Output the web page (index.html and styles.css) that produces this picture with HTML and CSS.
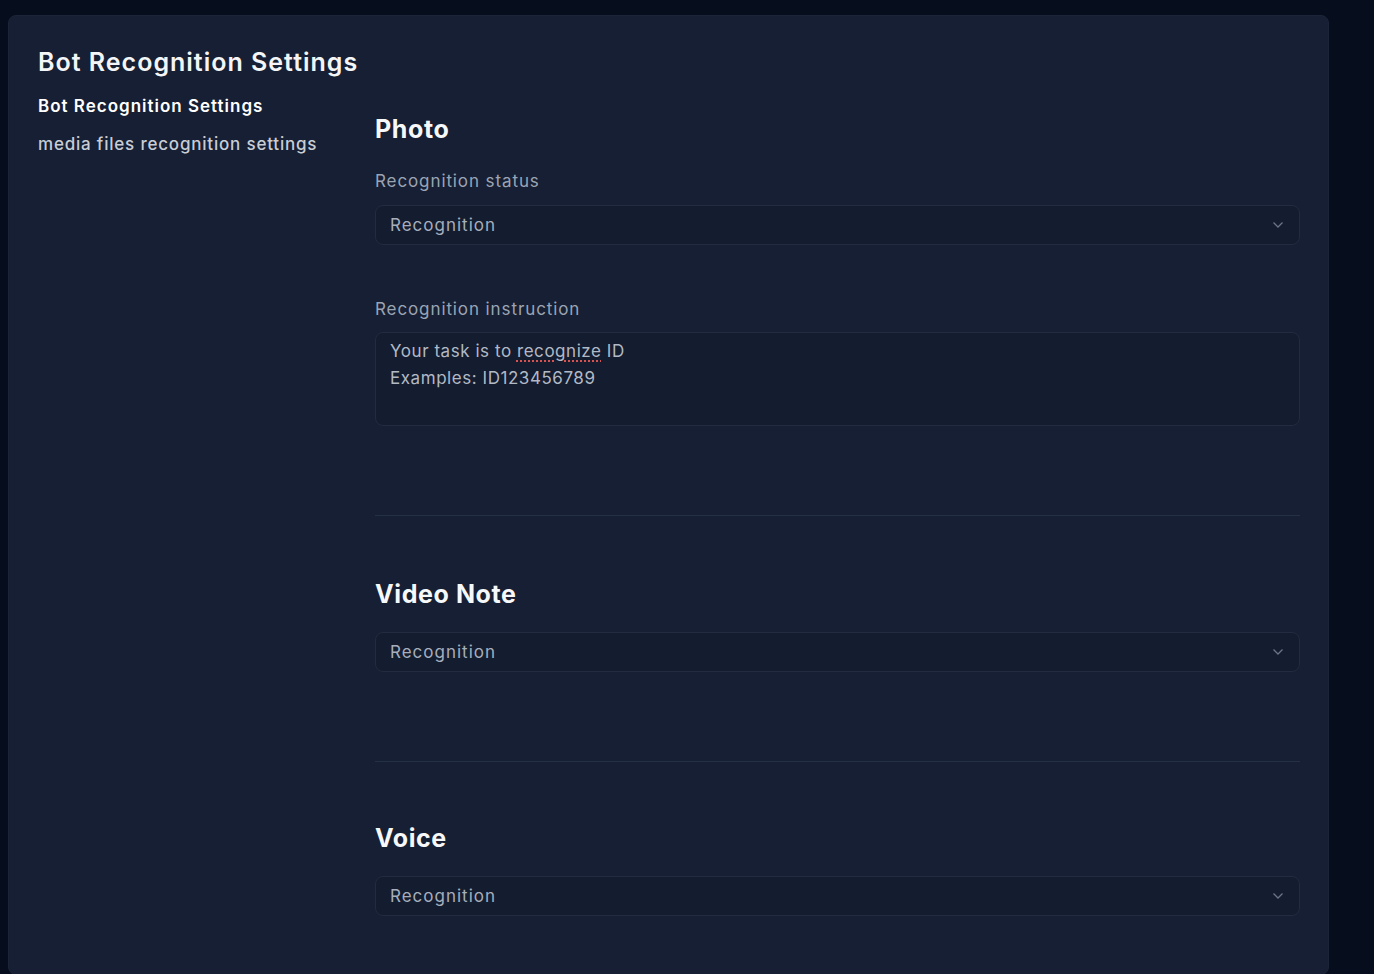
FILE: index.html
```html
<!DOCTYPE html>
<html lang="en">
<head>
<meta charset="utf-8">
<title>Bot Recognition Settings</title>
<link rel="stylesheet" href="styles.css">
</head>
<body>
<div class="card">
  <h1 class="page-title">Bot Recognition Settings</h1>
  <div class="layout">
    <nav class="sidebar">
      <a class="nav-item active">Bot Recognition Settings</a>
      <a class="nav-item">media files recognition settings</a>
    </nav>
    <main class="content">
      <section class="section first">
        <h2 class="section-title">Photo</h2>
        <div class="field">
          <div class="label">Recognition status</div>
          <div class="select">
            <span>Recognition</span>
            <svg class="chev" width="12" height="8" viewBox="0 0 12 8"><path d="M1.5 1.5 L6 6 L10.5 1.5" fill="none" stroke="currentColor" stroke-width="1.3"/></svg>
          </div>
        </div>
        <div class="field">
          <div class="label">Recognition instruction</div>
          <div class="textarea">
            <div>Your task is to <span class="spell">recognize</span> ID</div>
            <div>Examples: ID123456789</div>
          </div>
        </div>
      </section>
      <section class="section">
        <h2 class="section-title">Video Note</h2>
        <div class="select">
          <span>Recognition</span>
          <svg class="chev" width="12" height="8" viewBox="0 0 12 8"><path d="M1.5 1.5 L6 6 L10.5 1.5" fill="none" stroke="currentColor" stroke-width="1.3"/></svg>
        </div>
      </section>
      <section class="section last">
        <h2 class="section-title">Voice</h2>
        <div class="select">
          <span>Recognition</span>
          <svg class="chev" width="12" height="8" viewBox="0 0 12 8"><path d="M1.5 1.5 L6 6 L10.5 1.5" fill="none" stroke="currentColor" stroke-width="1.3"/></svg>
        </div>
      </section>
    </main>
  </div>
</div>
</body>
</html>
```
FILE: styles.css
```css
* { box-sizing: border-box; }
html, body { height: 100%; }
body {
  margin: 0;
  padding: 15px 45px 0 8px;
  background: #060e1d;
  font-family: Inter, "Open Sans", sans-serif;
  overflow: hidden;
}
.card {
  background: #161f33;
  border: 1px solid #1b2438;
  border-radius: 8px;
  padding: 30px 28px 30px 29px;
  min-height: 959px;
}
.page-title {
  margin: 0;
  font-size: 25px;
  line-height: 32px;
  font-weight: 600;
  color: #f4f5f7;
  letter-spacing: 1px;
}
.layout {
  display: flex;
  margin-top: 16px;
}
.sidebar {
  width: 337px;
  flex: none;
  display: flex;
  flex-direction: column;
  gap: 14px;
}
.nav-item {
  font-size: 17px;
  line-height: 24px;
  color: #c8cdd6;
  font-weight: 500;
  letter-spacing: 0.8px;
}
.nav-item.active {
  color: #ffffff;
  font-weight: 600;
  letter-spacing: 1px;
}
.content {
  flex: 1;
  min-width: 0;
  margin-top: -2px;
}
.section {
  padding: 63px 0 89px;
  border-bottom: 1px solid #243046;
}
.section.first { padding-top: 22px; }
.section.last { border-bottom: none; padding-top: 61px; padding-bottom: 28px; }
.section-title {
  margin: 0 0 23px;
  font-size: 25px;
  line-height: 30px;
  font-weight: 700;
  color: #f7f8fa;
  letter-spacing: 0.6px;
}
.field + .field { margin-top: 53px; }
.field .label {
  font-size: 17px;
  line-height: 22px;
  color: #9ba4b3;
  margin-top: 26px;
  margin-bottom: 13px;
  letter-spacing: 0.9px;
}
.field + .field .label { margin-top: 0; margin-bottom: 12px; }
.section.first .section-title { margin-bottom: 0; }
.select {
  height: 40px;
  border: 1px solid #222b3f;
  border-radius: 8px;
  background: #141c2f;
  display: flex;
  align-items: center;
  justify-content: space-between;
  padding: 0 15px 0 14px;
  font-size: 17px;
  color: #a6aebc;
  letter-spacing: 1px;
}
.chev { color: #6c7487; }
.textarea {
  height: 94px;
  border: 1px solid #222b3f;
  border-radius: 8px;
  background: #141c2f;
  padding: 5px 14px;
  font-size: 17px;
  line-height: 27px;
  color: #b2b9c5;
  letter-spacing: 0.55px;
}
.spell {
  text-decoration: underline dotted #d9524f;
  text-decoration-thickness: 2px;
  text-underline-offset: 3px;
}
```
